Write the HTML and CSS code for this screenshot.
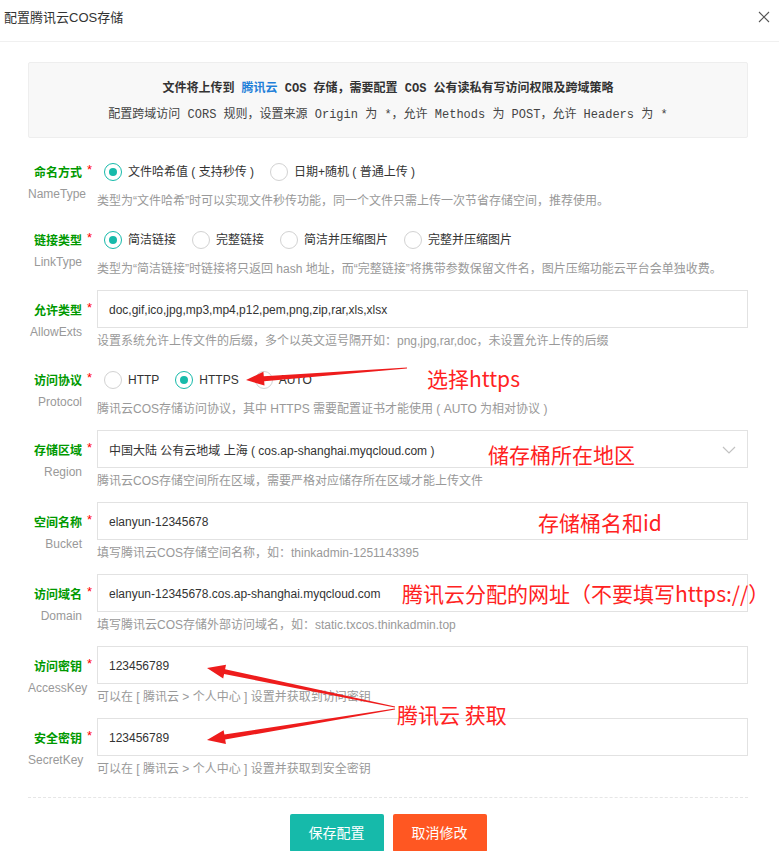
FILE: index.html
```html
<!DOCTYPE html>
<html lang="zh-CN">
<head>
<meta charset="utf-8">
<title>配置腾讯云COS存储</title>
<link rel="stylesheet" href="styles.css">
</head>
<body>
<div class="page">
  <div class="hd">
    <span class="hd-title">配置腾讯云COS存储</span>
    <svg class="hd-close" width="12" height="12" viewBox="0 0 12 12"><path d="M1 1L11 11M11 1L1 11" stroke="#555" stroke-width="1.1" fill="none"/></svg>
  </div>
  <div class="bd">
    <div class="notice">
      <p class="notice-l1">文件将上传到 <span class="blue">腾讯云</span> COS 存储，需要配置 COS 公有读私有写访问权限及跨域策略</p>
      <p class="notice-l2">配置跨域访问 CORS 规则，设置来源 Origin 为 *，允许 Methods 为 POST，允许 Headers 为 *</p>
    </div>

    <div class="row row-r">
      <div class="lab"><span class="lab-t">命名方式</span><span class="req">*</span><span class="lab-s">NameType</span></div>
      <div class="fld">
        <div class="radios">
          <label class="radio on"><i></i>文件哈希值 ( 支持秒传 )</label>
          <label class="radio"><i></i>日期+随机 ( 普通上传 )</label>
        </div>
        <div class="help">类型为“文件哈希”时可以实现文件秒传功能，同一个文件只需上传一次节省存储空间，推荐使用。</div>
      </div>
    </div>

    <div class="row row-r">
      <div class="lab"><span class="lab-t">链接类型</span><span class="req">*</span><span class="lab-s">LinkType</span></div>
      <div class="fld">
        <div class="radios">
          <label class="radio on"><i></i>简洁链接</label>
          <label class="radio"><i></i>完整链接</label>
          <label class="radio"><i></i>简洁并压缩图片</label>
          <label class="radio"><i></i>完整并压缩图片</label>
        </div>
        <div class="help">类型为“简洁链接”时链接将只返回 hash 地址，而“完整链接”将携带参数保留文件名，图片压缩功能云平台会单独收费。</div>
      </div>
    </div>

    <div class="row row-i">
      <div class="lab"><span class="lab-t">允许类型</span><span class="req">*</span><span class="lab-s">AllowExts</span></div>
      <div class="fld">
        <div class="ipt">doc,gif,ico,jpg,mp3,mp4,p12,pem,png,zip,rar,xls,xlsx</div>
        <div class="help">设置系统允许上传文件的后缀，多个以英文逗号隔开如：png,jpg,rar,doc，未设置允许上传的后缀</div>
      </div>
    </div>

    <div class="row row-r">
      <div class="lab"><span class="lab-t">访问协议</span><span class="req">*</span><span class="lab-s">Protocol</span></div>
      <div class="fld">
        <div class="radios">
          <label class="radio"><i></i>HTTP</label>
          <label class="radio on"><i></i>HTTPS</label>
          <label class="radio"><i></i>AUTO</label>
        </div>
        <div class="help">腾讯云COS存储访问协议，其中 HTTPS 需要配置证书才能使用 ( AUTO 为相对协议 )</div>
      </div>
    </div>

    <div class="row row-i">
      <div class="lab"><span class="lab-t">存储区域</span><span class="req">*</span><span class="lab-s">Region</span></div>
      <div class="fld">
        <div class="ipt sel">中国大陆 公有云地域 上海 ( cos.ap-shanghai.myqcloud.com )<svg class="chev" width="14" height="8" viewBox="0 0 14 8"><path d="M1 1L7 7L13 1" stroke="#c2c2c2" stroke-width="1.2" fill="none"/></svg></div>
        <div class="help">腾讯云COS存储空间所在区域，需要严格对应储存所在区域才能上传文件</div>
      </div>
    </div>

    <div class="row row-i">
      <div class="lab"><span class="lab-t">空间名称</span><span class="req">*</span><span class="lab-s">Bucket</span></div>
      <div class="fld">
        <div class="ipt">elanyun-12345678</div>
        <div class="help">填写腾讯云COS存储空间名称，如：thinkadmin-1251143395</div>
      </div>
    </div>

    <div class="row row-i">
      <div class="lab"><span class="lab-t">访问域名</span><span class="req">*</span><span class="lab-s">Domain</span></div>
      <div class="fld">
        <div class="ipt">elanyun-12345678.cos.ap-shanghai.myqcloud.com</div>
        <div class="help">填写腾讯云COS存储外部访问域名，如：static.txcos.thinkadmin.top</div>
      </div>
    </div>

    <div class="row row-i">
      <div class="lab"><span class="lab-t">访问密钥</span><span class="req">*</span><span class="lab-s">AccessKey</span></div>
      <div class="fld">
        <div class="ipt">123456789</div>
        <div class="help">可以在 [ 腾讯云 &gt; 个人中心 ] 设置并获取到访问密钥</div>
      </div>
    </div>

    <div class="row row-i">
      <div class="lab"><span class="lab-t">安全密钥</span><span class="req">*</span><span class="lab-s">SecretKey</span></div>
      <div class="fld">
        <div class="ipt">123456789</div>
        <div class="help">可以在 [ 腾讯云 &gt; 个人中心 ] 设置并获取到安全密钥</div>
      </div>
    </div>

    <div class="ft">
      <button class="btn btn-save">保存配置</button><button class="btn btn-cancel">取消修改</button>
    </div>
  </div>

  <div class="marks">
    <svg class="arrows" width="779" height="851" viewBox="0 0 779 851">
      <polygon fill="#ee1c1c" points="246,380 264.5,385.6 264.2,381.2 407,368.5 407,367.5 263.8,376.2 263.4,371.7"/>
      <polygon fill="#ee1c1c" points="207,668 223.2,678.5 224.1,674.1 394.9,707.5 395.1,706.5 225.1,669.2 226,664.8"/>
      <polygon fill="#ee1c1c" points="207,740 225.9,744 225.2,739.5 395.1,709.5 394.9,708.5 224.4,734.6 223.6,730.2"/>
    </svg>
    <span class="note n1">选择https</span>
    <span class="note n2">储存桶所在地区</span>
    <span class="note n3">存储桶名和id</span>
    <span class="note n4">腾讯云分配的网址（不要填写https://）</span>
    <span class="note n5">腾讯云 获取</span>
  </div>
</div>
</body>
</html>
```

FILE: styles.css
```css
html, body {
  margin: 0;
  padding: 0;
  background: #fff;
}
body {
  font-family: "Liberation Sans", "Noto Sans CJK SC", sans-serif;
  font-size: 12px;
  color: #333;
}
.page {
  position: relative;
  width: 779px;
  height: 851px;
  overflow: hidden;
}
.hd {
  height: 42px;
  box-sizing: border-box;
  border-bottom: 1px solid #f0f0f0;
  display: flex;
  justify-content: space-between;
  align-items: flex-start;
  padding: 9px 9px 0 4px;
}
.hd-title {
  font-size: 13px;
  line-height: 18px;
  color: #333;
}
.hd-close {
  margin-top: 2px;
}
.bd {
  padding: 20px 31px 0 28px;
}
.notice {
  box-sizing: border-box;
  height: 76px;
  background: #f8f8f8;
  border: 1px solid #eee;
  border-radius: 2px;
  text-align: center;
  padding-top: 16px;
  font-family: "Liberation Mono", "Noto Sans CJK SC", monospace;
  font-size: 12px;
}
.notice p {
  margin: 0;
  line-height: 20px;
}
.notice-l1 {
  font-weight: bold;
  color: #333;
}
.notice-l2 {
  margin-top: 6px !important;
  color: #444;
}
.blue {
  color: #1f7fd8;
}
.row {
  display: grid;
  grid-template-columns: 69px 1fr;
  margin-bottom: 10px;
}
.bd .notice + .row {
  margin-top: 16px;
}
.lab {
  position: relative;
  text-align: right;
  padding-right: 15px;
}
.row-r .lab { padding-top: 9px; }
.row-i .lab { padding-top: 11px; }
.lab-t {
  display: block;
  color: #090;
  font-weight: bold;
  line-height: 20px;
}
.lab-s {
  display: block;
  color: #999;
  line-height: 21px;
  padding-top: 1px;
}
.req {
  position: absolute;
  right: 5px;
  color: #f00;
  line-height: 20px;
  font-size: 13px;
}
.row-r .req { top: 6px; }
.row-i .req { top: 8px; }
.radios {
  box-sizing: border-box;
  height: 34px;
  display: flex;
  align-items: center;
  padding-left: 7px;
  padding-top: 1px;
}
.radio {
  display: flex;
  align-items: center;
  margin-right: 16px;
  color: #333;
  line-height: 20px;
}
.radio i {
  box-sizing: border-box;
  width: 18px;
  height: 18px;
  border: 1px solid #d2d2d2;
  border-radius: 50%;
  margin-right: 6px;
  display: flex;
  align-items: center;
  justify-content: center;
}
.radio.on i {
  border: 1.5px solid #16baaa;
}
.radio.on i::after {
  content: "";
  width: 8px;
  height: 8px;
  border-radius: 50%;
  background: #16baaa;
}
.ipt {
  height: 38px;
  box-sizing: border-box;
  border: 1px solid #e2e2e2;
  padding: 1px 11px 0;
  display: flex;
  align-items: center;
  color: #333;
  white-space: nowrap;
}
.sel .chev {
  margin-left: auto;
}
.help {
  line-height: 22px;
  padding-top: 2px;
  color: #999;
  white-space: nowrap;
}
.ft {
  margin-top: 17px;
  border-top: 1px dashed #e6e6e6;
  padding-top: 16px;
  display: flex;
  justify-content: center;
  gap: 9px;
}
.btn {
  height: 38px;
  padding: 0 19px;
  border: 0;
  border-radius: 2px;
  color: #fff;
  font-family: "Liberation Sans", "Noto Sans CJK SC", sans-serif;
  font-size: 14px;
  line-height: 38px;
}
.btn-save { background: #16baaa; }
.btn-cancel { background: #ff5722; }
.marks {
  position: absolute;
  left: 0;
  top: 0;
  width: 779px;
  height: 851px;
  pointer-events: none;
}
.arrows {
  position: absolute;
  left: 0;
  top: 0;
}
.note {
  position: absolute;
  color: #f22;
  font-family: "Noto Sans CJK SC", sans-serif;
  font-size: 21px;
  line-height: 24px;
  white-space: nowrap;
}
.n1 { left: 427px; top: 366px; }
.n2 { left: 488px; top: 442px; }
.n3 { left: 538px; top: 510px; }
.n4 { left: 402px; top: 581px; }
.n5 { left: 397px; top: 702px; }
```
